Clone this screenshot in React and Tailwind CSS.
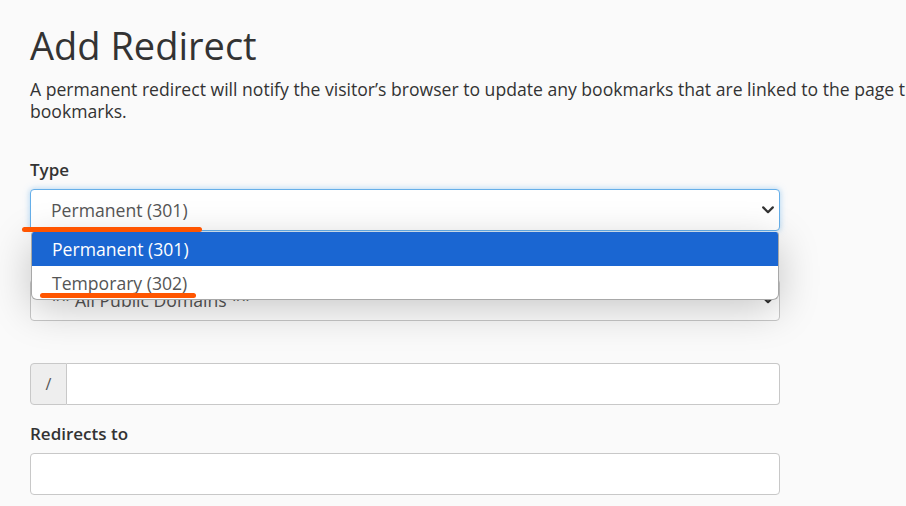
import React from 'react'

const font = { fontFamily: '"Open Sans", "Noto Sans", sans-serif' }

const Chevron = ({ className = '' }) => (
  <svg width="12" height="8" viewBox="0 0 12 8" fill="none" stroke="currentColor" strokeWidth="2.2" strokeLinecap="round" strokeLinejoin="round" aria-hidden="true" className={className}>
    <path d="M1.2 1.4 6 6.2l4.8-4.8" />
  </svg>
)

function SelectBox({ value, focused }) {
  return (
    <div
      className={
        'h-[42px] w-[750px] rounded-[4px] border bg-white flex items-center justify-between pl-[20px] pr-[5px] text-[17.6px] text-[#555] ' +
        (focused
          ? 'border-[#66afe9] shadow-[0_0_6px_rgba(102,175,233,0.55)]'
          : 'border-[#c8c8c8]')
      }
    >
      <span className="leading-[24px] whitespace-nowrap">{value}</span>
      <Chevron className="text-[#333]" />
    </div>
  )
}

export default function App() {
  return (
    <div className="relative h-[506px] w-full overflow-hidden bg-[#fafafa] text-[#333]" style={font}>
      <div className="pl-[30px] pt-[24px]">
        <h1 className="text-[38px] leading-[42px] font-normal text-[#333]">Add Redirect</h1>
        <p className="mt-[12px] text-[17.6px] leading-[22px] text-[#333]">
          <span className="whitespace-nowrap">
            A permanent redirect will notify the visitor’s browser to update any bookmarks that are linked to the page that is being redirected. A temporary redirect will not update the visitor’s
          </span>
          <br />
          bookmarks.
        </p>

        <label className="block mt-[37px] text-[17px] leading-[22px] font-semibold">Type</label>
        <div className="mt-[8px]">
          <SelectBox value="Permanent (301)" focused />
        </div>

        <label className="block mt-[17px] text-[17px] leading-[22px] font-semibold">https?://(www.)?</label>
        <div className="mt-[9px]">
          <SelectBox value="** All Public Domains **" />
        </div>

        <div className="mt-[42px] flex h-[42px] w-[750px]">
          <span className="w-[37px] flex items-center justify-center rounded-l-[4px] border border-[#c8c8c8] bg-[#eee] text-[16px] text-[#555]">/</span>
          <div className="flex-1 rounded-r-[4px] border border-l-0 border-[#c8c8c8] bg-white" />
        </div>

        <label className="block mt-[18px] text-[17px] leading-[22px] font-semibold">Redirects to</label>
        <div className="mt-[8px] h-[42px] w-[750px] rounded-[4px] border border-[#c8c8c8] bg-white" />
      </div>

      {/* open option list */}
      <div className="absolute left-[31px] top-[232px] w-[748px] overflow-hidden rounded-t-[3px] rounded-b-[6px] border border-t-0 border-[#a8a8a8] bg-white text-[17.6px] shadow-[0_10px_40px_rgba(0,0,0,0.22)]">
        <div className="h-[34px] flex items-center pl-[20px] bg-[#1a66d2] text-white leading-[24px]">Permanent (301)</div>
        <div className="h-[33px] flex items-center pl-[20px] text-[#555] leading-[24px]">Temporary (302)</div>
      </div>

      {/* annotation marks */}
      <div className="absolute left-[22px] top-[227px] h-[5px] w-[180px] rounded-full bg-[#ff5500]" />
      <div className="absolute left-[40px] top-[293px] h-[5px] w-[156px] rounded-full bg-[#ff5500]" />
    </div>
  )
}
